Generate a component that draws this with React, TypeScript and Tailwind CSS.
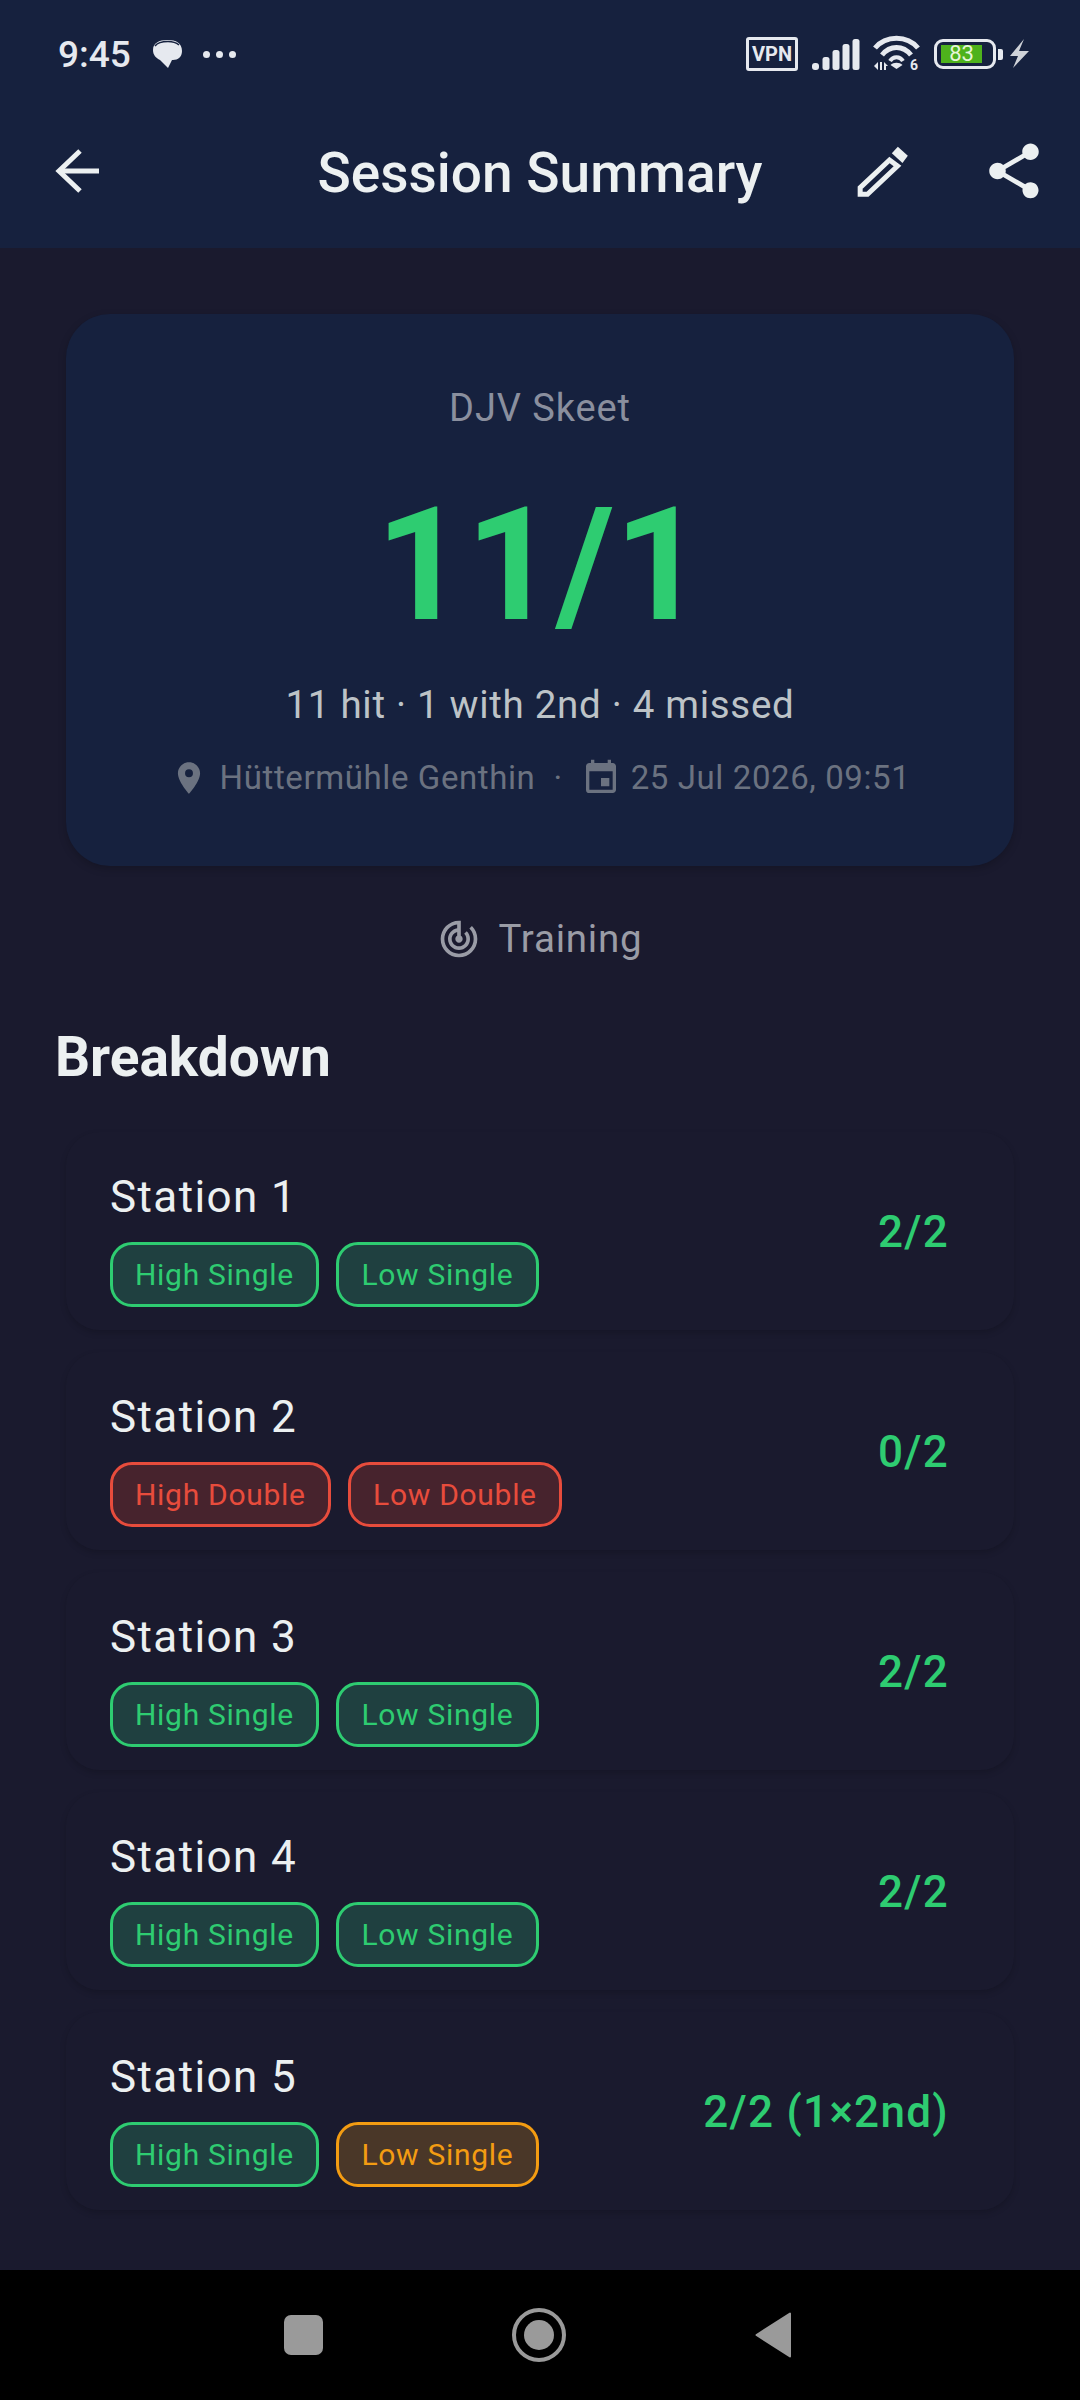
import { MdEvent, MdPlace, MdShare, MdTrackChanges } from "react-icons/md";

type Tone = "green" | "red" | "amber";

const toneClass: Record<Tone, string> = {
  green: "border-[#2ecc71] bg-[#1f4040] text-[#2ecc71]",
  red: "border-[#e74c3c] bg-[#47232d] text-[#e74c3c]",
  amber: "border-[#f39c12] bg-[#4a3728] text-[#f39c12]",
};

const stations: { name: string; score: string; tags: [string, Tone][] }[] = [
  { name: "Station 1", score: "2/2", tags: [["High Single", "green"], ["Low Single", "green"]] },
  { name: "Station 2", score: "0/2", tags: [["High Double", "red"], ["Low Double", "red"]] },
  { name: "Station 3", score: "2/2", tags: [["High Single", "green"], ["Low Single", "green"]] },
  { name: "Station 4", score: "2/2", tags: [["High Single", "green"], ["Low Single", "green"]] },
  { name: "Station 5", score: "2/2 (1×2nd)", tags: [["High Single", "green"], ["Low Single", "amber"]] },
];

function StatusBar() {
  return (
    <div className="flex h-[94px] items-center justify-between pl-[58px] pr-[50px] pt-[14px] text-[#e6e9ef]">
      <div className="flex items-center">
        <span className="text-[37px] font-medium leading-none">9:45</span>
        <svg className="ml-[22px]" width="29" height="30" viewBox="0 0 29 30">
          <path d="M0 11C0 4 6 1 14.5 1S29 4 29 12c0 6-4 9-9 9h-1l-4 8-8-8C3 19 0 16 0 11z" fill="#e6e9ef" />
          <path d="M2 7C5 3 10 2.500 15 2.500c4 0 8 1 11 3.500" fill="none" stroke="#16213e" strokeWidth="1.500" />
        </svg>
        <div className="ml-[21px] flex gap-[6px]">
          <div className="h-[7px] w-[7px] rounded-full bg-[#e6e9ef]" />
          <div className="h-[7px] w-[7px] rounded-full bg-[#e6e9ef]" />
          <div className="h-[7px] w-[7px] rounded-full bg-[#e6e9ef]" />
        </div>
      </div>
      <div className="flex items-center">
        <div className="flex h-[34px] w-[52px] items-center justify-center rounded-[3px] border-[3px] border-[#e6e9ef] text-[20px] font-bold leading-none">
          VPN
        </div>
        <svg className="ml-[14px]" width="48" height="31" viewBox="0 0 48 31" fill="#e6e9ef">
          <rect x="0" y="24" width="7" height="7" rx="3" />
          <rect x="10.500" y="18" width="7" height="13" rx="2.500" />
          <rect x="20.500" y="11" width="7" height="20" rx="2.500" />
          <rect x="30.500" y="5" width="7" height="26" rx="2.500" />
          <rect x="40.500" y="0" width="7" height="31" rx="2.500" />
        </svg>
        <svg className="ml-[13px]" width="47" height="38" viewBox="0 0 47 38" fill="none" stroke="#e6e9ef">
          <path d="M2 13C13 0 34 0 45 13" strokeWidth="5" />
          <path d="M9 20C17 10 30 10 38 20" strokeWidth="5" />
          <path d="M17 26C20 21 27 21 30 26" strokeWidth="4" />
          <path d="M23.500 34l-6-4c3-3 9-3 12 0z" fill="#e6e9ef" stroke="none" />
          <path d="M1 31l4-4v8zM7 27h2v8H7zM11 27l4 4h-2v4h-2z" fill="#e6e9ef" stroke="none" />
          <text x="37" y="35" fontSize="14" fontWeight="700" fill="#e6e9ef" stroke="none" fontFamily="Roboto, sans-serif">
            6
          </text>
        </svg>
        <div className="ml-[14px] flex h-[30px] w-[62px] items-center rounded-[9px] border-[3px] border-[#e6e9ef] pl-[4px]">
          <div className="flex h-[18px] w-[41px] items-center justify-center bg-[#4eb21c] text-[22px] leading-none text-[#e6f5d8]">
            83
          </div>
        </div>
        <div className="ml-[2px] h-[11px] w-[5px] rounded-r-[2px] bg-[#e6e9ef]" />
        <svg className="ml-[7px]" width="20" height="30" viewBox="0 0 20 30">
          <path d="M14 0 L9 12 H19 L3 29 L8 17 H0 Z" fill="#cfd2d8" />
        </svg>
      </div>
    </div>
  );
}

function BackIcon() {
  return (
    <svg width="44" height="44" viewBox="0 0 44 44" fill="none" stroke="#ecf0f1" strokeWidth="5">
      <path d="M44 22H4" />
      <path d="M25 2L4 22l21 20" />
    </svg>
  );
}

function EditIcon() {
  return (
    <svg width="57" height="55" viewBox="460 430 170 165">
      <path d="M591 438l30 27-16 22-32-29z" fill="#ecf0f1" />
      <path d="M566 478L478 561V581H500L590 496Z" fill="none" stroke="#ecf0f1" strokeWidth="15" />
    </svg>
  );
}

function TopBar() {
  return (
    <header className="bg-[#16213e]">
      <StatusBar />
      <div className="flex h-[154px] items-center text-[#ecf0f1]">
        <div className="flex w-[264px] pl-[55px]">
          <BackIcon />
        </div>
        <h1 className="flex-1 pt-[5px] text-center text-[55px] font-medium leading-none">Session Summary</h1>
        <div className="flex w-[264px]">
          <div className="flex h-[132px] w-[132px] items-center justify-center">
            <EditIcon />
          </div>
          <div className="flex h-[132px] w-[132px] items-center justify-center">
            <MdShare size={66} />
          </div>
        </div>
      </div>
    </header>
  );
}

function Tag({ label, tone }: { label: string; tone: Tone }) {
  return (
    <div
      className={`flex h-[65px] items-center rounded-[22px] border-[3px] pl-[22px] pr-[22.5px] text-[30px] leading-none tracking-[0.7px] ${toneClass[tone]}`}
    >
      {label}
    </div>
  );
}

function StationCard({ name, score, tags }: (typeof stations)[number]) {
  return (
    <div className="flex h-[198px] items-center justify-between rounded-[33px] bg-[#1a1a2e] pl-[44px] pr-[65px] shadow-[0_3px_6px_rgba(0,0,0,0.16)]">
      <div className="pt-[14px]">
        <div className="text-[44px] leading-[56px] tracking-[1.4px] text-[#ecf0f1]">{name}</div>
        <div className="mt-[17px] flex gap-[17px]">
          {tags.map(([label, tone]) => (
            <Tag key={label} label={label} tone={tone} />
          ))}
        </div>
      </div>
      <div className="pt-[2px] text-[44px] font-medium leading-none tracking-[1.3px] text-[#2ecc71]">{score}</div>
    </div>
  );
}

export default function App() {
  return (
    <div className="flex h-[2400px] w-[1080px] flex-col overflow-hidden bg-[#1a1a2e] font-['Roboto',sans-serif]">
      <TopBar />

      <main className="flex-1">
        {/* Score card */}
        <section className="mx-[66px] mt-[66px] flex h-[552px] flex-col items-center rounded-[44px] bg-[#16213e] pt-[71px] shadow-[0_3px_8px_rgba(0,0,0,0.2)]">
          <div className="text-[38px] leading-[46px] tracking-[0.9px] text-[#8a8f9e]">DJV Skeet</div>
          <div className="mt-[44px] text-[157px] font-bold leading-[180px] text-[#2ecc71]">11/1</div>
          <div className="mt-[24px] text-[38.5px] leading-[52px] tracking-[0.7px] text-[#bdc3c7]">
            11 hit · 1 with 2nd · 4 missed
          </div>
          <div className="mt-[25px] flex h-[44px] items-center text-[33px] tracking-[0.6px] text-[#6b7280]">
            <MdPlace size={38} className="mr-[12px]" />
            <span>Hüttermühle Genthin</span>
            <span className="mx-[18px]">·</span>
            <MdEvent size={40} className="mr-[10px]" />
            <span>25 Jul 2026, 09:51</span>
          </div>
        </section>

        <div className="mt-[47px] flex h-[50px] items-center justify-center pt-[1px] text-[38.5px] tracking-[0.8px] text-[#9a9ca6]">
          <MdTrackChanges size={44} className="mr-[17px]" />
          Training
        </div>

        <h2 className="ml-[55px] mt-[61px] text-[55px] font-bold leading-[66px] text-[#ecf0f1]">Breakdown</h2>

        <div className="mx-[66px] mt-[42px] flex flex-col gap-[22px]">
          {stations.map((s) => (
            <StationCard key={s.name} {...s} />
          ))}
        </div>
      </main>

      {/* Android nav bar */}
      <nav className="flex h-[130px] items-center justify-center bg-black pr-[4px]">
        <div className="flex items-center gap-[189px]">
          <div className="h-[40px] w-[39px] rounded-[7px] bg-[#9a9a9a]" />
          <div className="flex h-[54px] w-[54px] items-center justify-center rounded-full border-[4px] border-[#9a9a9a]">
            <div className="h-[30px] w-[30px] rounded-full bg-[#9a9a9a]" />
          </div>
          <svg width="37" height="46" viewBox="0 0 37 46">
            <path d="M35 1.500V44.500L1.500 23Z" fill="#9a9a9a" stroke="#9a9a9a" strokeWidth="2" strokeLinejoin="round" />
          </svg>
        </div>
      </nav>
    </div>
  );
}
